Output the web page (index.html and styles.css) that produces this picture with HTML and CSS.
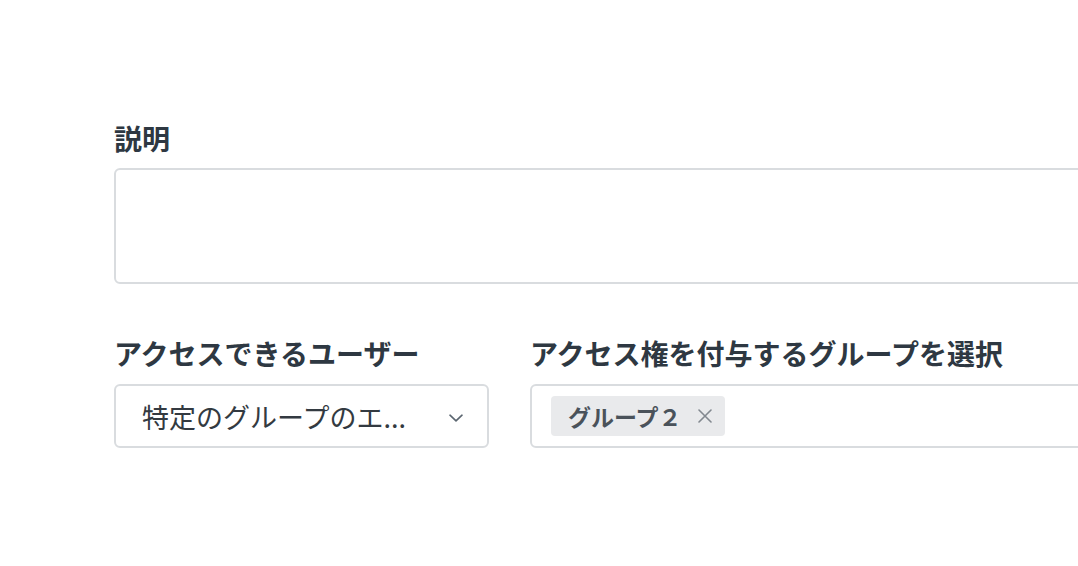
FILE: index.html
```html
<!DOCTYPE html>
<html lang="ja">
<head>
<meta charset="utf-8">
<link rel="stylesheet" href="styles.css">
</head>
<body>
<div class="viewport">
  <form class="form">
    <div class="field">
      <label class="label">説明</label>
      <div class="textarea"></div>
    </div>
    <div class="row">
      <div class="field field-narrow">
        <label class="label">アクセスできるユーザー</label>
        <div class="select">
          <span class="select-value">特定のグループのエ...</span>
          <svg class="chevron" width="14" height="8" viewBox="0 0 14 8"><path d="M1 1.2 L7 6.8 L13 1.2" fill="none" stroke="#5b6670" stroke-width="1.6" stroke-linecap="round" stroke-linejoin="round"/></svg>
        </div>
      </div>
      <div class="field field-wide">
        <label class="label">アクセス権を付与するグループを選択</label>
        <div class="multiselect">
          <span class="chip">グループ２<svg class="chip-x" width="14" height="14" viewBox="0 0 14 14"><path d="M1 1 L13 13 M13 1 L1 13" fill="none" stroke="#82888f" stroke-width="1.6" stroke-linecap="round"/></svg></span>
        </div>
      </div>
    </div>
  </form>
</div>
</body>
</html>
```

FILE: styles.css
```css
html, body {
  margin: 0;
  padding: 0;
  background: #ffffff;
  overflow: hidden;
}
.viewport {
  width: 1078px;
  height: 566px;
  overflow: hidden;
}
.form {
  width: 1500px;
  padding: 118px 0 0 114px;
  font-family: "Noto Sans CJK JP", "Noto Sans", sans-serif;
  color: #2e3842;
}
.field {
  display: flex;
  flex-direction: column;
}
.label {
  font-size: 28px;
  font-weight: 700;
  line-height: 40px;
  color: #2e3842;
  margin-bottom: 10px;
  white-space: nowrap;
}
.textarea {
  height: 112px;
  border: 2px solid #d9dcdf;
  border-radius: 6px;
  box-sizing: content-box;
}
.row {
  display: flex;
  gap: 41px;
  margin-top: 49px;
}
.field-narrow {
  width: 375px;
  flex: none;
}
.field-wide {
  flex: 1;
}
.select {
  height: 60px;
  margin-top: 1px;
  border: 2px solid #d9dcdf;
  border-radius: 6px;
  display: flex;
  align-items: center;
  padding: 0 26px 0 26px;
  justify-content: space-between;
}
.select-value {
  font-size: 27px;
  color: #333a41;
  white-space: nowrap;
}
.chevron {
  display: block;
  margin-right: -2px;
  margin-top: 3px;
}
.multiselect {
  height: 60px;
  margin-top: 1px;
  border: 2px solid #d9dcdf;
  border-radius: 6px;
  display: flex;
  align-items: center;
  padding: 0 19px;
}
.chip {
  display: inline-flex;
  align-items: center;
  height: 40px;
  background: #e9eaec;
  border-radius: 4px;
  padding: 0 13px 0 17px;
  font-size: 23px;
  font-weight: 700;
  color: #4a525a;
}
.chip-x {
  display: block;
  margin-left: 16px;
}
```
